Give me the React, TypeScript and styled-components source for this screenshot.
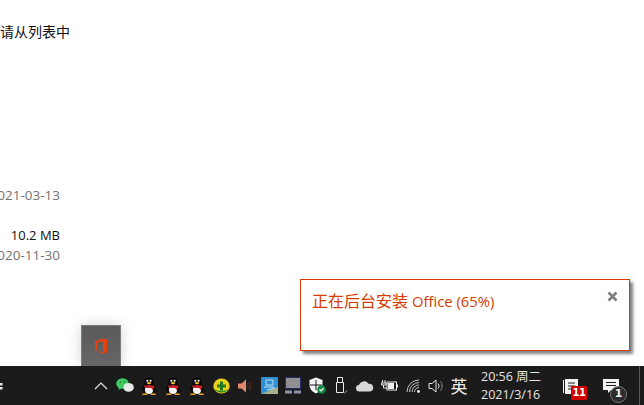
import React from 'react';
import styled, { createGlobalStyle } from 'styled-components';

const GlobalStyle = createGlobalStyle`
  html, body {
    margin: 0;
    padding: 0;
    width: 644px;
    height: 405px;
    overflow: hidden;
    background: #fff;
  }
  body {
    font-family: "Open Sans", "Noto Sans CJK SC", sans-serif;
  }
`;

const Screen = styled.div`
  position: relative;
  width: 644px;
  height: 405px;
  display: flex;
  flex-direction: column;
  overflow: hidden;
`;

const Content = styled.main`
  flex: 1;
  display: flex;
  flex-direction: column;
`;

const Hint = styled.div`
  margin-top: 22px;
  height: 18px;
  font: 14px/18px "Noto Sans CJK SC", sans-serif;
  color: #111;
  white-space: nowrap;
`;

const FileColumn = styled.div`
  width: 60px;
  display: flex;
  flex-direction: column;
  align-items: flex-end;
  margin-top: 146px;
`;

const DateText = styled.div<{ $gap?: number }>`
  height: 18px;
  margin-top: ${(p) => p.$gap ?? 0}px;
  font: 13.5px/18px "Open Sans", sans-serif;
  color: #737373;
  white-space: nowrap;
`;

const SizeText = styled.div`
  height: 18px;
  margin-top: 22px;
  font: 13px/18px "Open Sans", sans-serif;
  color: #111;
  white-space: nowrap;
`;

const Toast = styled.div`
  position: absolute;
  left: 300px;
  top: 279px;
  width: 306px;
  height: 70px;
  padding: 0 11px;
  border: 1px solid #d83b01;
  background: #fff;
  box-shadow: 3px 3px 3px #808080;
  display: flex;
  justify-content: space-between;
`;

const ToastText = styled.div`
  margin-top: 10px;
  font: 16px/20px "Noto Sans CJK SC", sans-serif;
  color: #d83b01;
  white-space: nowrap;
`;

const ToastLatin = styled.span`
  margin-left: 4px;
  font: 14.8px/20px "Open Sans", sans-serif;
`;

const CloseIcon = styled.svg`
  margin-top: 11px;
  width: 11px;
  height: 11px;
`;

const Thumb = styled.div`
  position: absolute;
  left: 81px;
  top: 325px;
  width: 40px;
  height: 41px;
  box-sizing: border-box;
  background: linear-gradient(#5a5a5a, #666);
  border: 1px solid #7c7c7c;
  border-bottom: none;
  box-shadow: 0 0 12px rgba(0, 0, 0, 0.18);
  display: flex;
  align-items: center;
  justify-content: center;
`;

const Taskbar = styled.footer`
  height: 39px;
  flex-shrink: 0;
  background: #1b1b1b;
  display: flex;
  align-items: center;
  color: #e8e8e8;
  position: relative;
`;

const StartStub = styled.svg`
  width: 4px;
  height: 12px;
  margin-right: 85px;
`;

const Tray = styled.div`
  display: flex;
  align-items: center;
`;

const Slot = styled.div<{ $w?: number }>`
  width: ${(p) => p.$w ?? 24}px;
  height: 39px;
  display: flex;
  align-items: center;
  justify-content: center;
  flex-shrink: 0;
`;

const Ime = styled.div`
  width: 24px;
  text-align: center;
  font: 17px/39px "Noto Sans CJK SC", sans-serif;
  color: #ededed;
`;

const Clock = styled.div`
  margin-left: 10px;
  width: 60px;
  display: flex;
  flex-direction: column;
  font: 12.5px/18px "Open Sans", "Noto Sans CJK SC", sans-serif;
  color: #e6e6e6;
  white-space: nowrap;
`;

const ActionWrap = styled.div<{ $left: number }>`
  position: relative;
  margin-left: ${(p) => p.$left}px;
  width: 24px;
  height: 24px;
`;

const ActionIcon = styled.svg`
  display: block;
  margin-top: 5px;
`;

const RedBadge = styled.div`
  position: absolute;
  left: 8px;
  top: 12px;
  width: 16px;
  height: 14px;
  background: #d00000;
  border-radius: 1px;
  color: #fff;
  font: bold 10px/14px "DejaVu Sans", sans-serif;
  text-align: center;
  letter-spacing: -0.5px;
`;

const RoundBadge = styled.div`
  position: absolute;
  left: 7px;
  top: 12px;
  width: 17px;
  height: 17px;
  box-sizing: border-box;
  border: 1.5px solid #7a7a7a;
  border-radius: 50%;
  background: #2b2b2b;
  color: #eee;
  font: bold 11px/14px "DejaVu Sans", sans-serif;
  text-align: center;
`;

const Divider = styled.div`
  position: absolute;
  right: 4px;
  top: 0;
  width: 1px;
  height: 100%;
  background: #5a5a5a;
`;

const Penguin = () => (
  <svg width="16" height="18" viewBox="0 0 15 17">
    <ellipse cx="7.500" cy="5.500" rx="4.600" ry="5.300" fill="#0a0a0a" />
    <ellipse cx="7.500" cy="11" rx="6.200" ry="5.600" fill="#0a0a0a" />
    <ellipse cx="7.500" cy="12.200" rx="3.800" ry="3.900" fill="#f4f4f4" />
    <ellipse cx="7.500" cy="5.800" rx="2" ry="1" fill="#f2b21c" />
    <circle cx="6" cy="3.600" r="1" fill="#fff" />
    <circle cx="9" cy="3.600" r="1" fill="#fff" />
    <path d="M2.500 8h10v1.800l-1 .6v2l-2-2H4z" fill="#d3202a" />
    <path d="M1.500 15.600h4.400v1.400H1zM9.100 15.600h4.400l.5 1.400H9.100z" fill="#f0a020" />
  </svg>
);

const App = () => (
  <>
    <GlobalStyle />
    <Screen>
      <Content>
        <Hint>请从列表中</Hint>
        <FileColumn>
          <DateText>2021-03-13</DateText>
          <SizeText>10.2 MB</SizeText>
          <DateText $gap={2}>2020-11-30</DateText>
        </FileColumn>
      </Content>

      <Toast>
        <ToastText>
          正在后台安装<ToastLatin>Office (65%)</ToastLatin>
        </ToastText>
        <CloseIcon viewBox="0 0 11 11">
          <path d="M1.500 1.500l8 8M9.500 1.500l-8 8" stroke="#7d7d7d" strokeWidth="2.600" />
        </CloseIcon>
      </Toast>

      <Thumb>
        <svg width="14" height="16" viewBox="0 0 14 16">
          <path d="M1 3.200 9 .6l4 1v12.800l-4 1.200-8-2.600 8 1V3.400L3.600 4.600v7L1 12.800z" fill="#e8400c" />
        </svg>
      </Thumb>

      <Taskbar>
        <StartStub viewBox="0 0 4 12">
          <path d="M0 3h2.500v2.500H0zM0 7h2.500v2.500H0z" fill="#e8e8e8" />
        </StartStub>
        <Tray>
          <Slot>
            <svg width="14" height="8" viewBox="0 0 14 8">
              <path d="M1 7l6-6 6 6" stroke="#e4e4e4" strokeWidth="1.200" fill="none" />
            </svg>
          </Slot>
          <Slot>
            <svg width="18" height="15" viewBox="0 0 18 15">
              <ellipse cx="6.500" cy="5.500" rx="6.300" ry="5.200" fill="#3fcb62" />
              <path d="M3 9l-.6 3 3-1.800z" fill="#3fcb62" />
              <ellipse cx="12.600" cy="9.400" rx="5.200" ry="4.400" fill="#e8e8e8" />
              <circle cx="4.400" cy="4" r=".8" fill="#1b6b32" />
              <circle cx="8.400" cy="4" r=".8" fill="#1b6b32" />
            </svg>
          </Slot>
          <Slot><Penguin /></Slot>
          <Slot><Penguin /></Slot>
          <Slot><Penguin /></Slot>
          <Slot>
            <svg width="17" height="16" viewBox="0 0 17 16">
              <ellipse cx="8.500" cy="8" rx="8.200" ry="7.600" fill="#e8d21a" />
              <path d="M1 11c2 4 12 5 15 0-3 2-10 3-15 0z" fill="#2f8a22" />
              <path d="M7 3.500h3V6.500h3v3h-3v3H7v-3H4v-3h3z" fill="#1f7a20" />
            </svg>
          </Slot>
          <Slot>
            <svg width="16" height="16" viewBox="0 0 16 16">
              <path d="M1 5.500h3.500L9 1.500v13L4.500 10.500H1z" fill="#e08a70" />
              <path d="M11 5v6M13.400 4v8" stroke="#4a2a20" strokeWidth="1.200" />
            </svg>
          </Slot>
          <Slot>
            <svg width="17" height="17" viewBox="0 0 17 17">
              <rect width="17" height="17" rx="1" fill="#2f8fd0" />
              <path d="M0 17 17 10v7z" fill="#a9b08c" />
              <path d="M5 3h7v5H5zM3 10h10M6 13l8-2" stroke="#bfe0f4" strokeWidth="1" fill="none" />
            </svg>
          </Slot>
          <Slot>
            <svg width="16" height="17" viewBox="0 0 16 17">
              <rect x=".5" y=".5" width="15" height="11" fill="#8f8f8f" stroke="#2a2a70" />
              <rect x="0" y="13.500" width="7" height="3" fill="#8d93a8" />
              <rect x="9" y="13.500" width="7" height="3" fill="#8d93a8" />
            </svg>
          </Slot>
          <Slot>
            <svg width="17" height="17" viewBox="0 0 17 17">
              <path d="M7 .5 13.500 3v5c0 4-3 7-6.500 8.500C3.500 15 .5 12 .5 8V3z" fill="#f2f2f2" />
              <path d="M7 3v10M1 8h12" stroke="#1b1b1b" strokeWidth="1" />
              <circle cx="12.500" cy="12.500" r="4.300" fill="#128a45" />
              <path d="M10.500 12.500l1.500 1.500 2.500-2.800" stroke="#fff" strokeWidth="1.200" fill="none" />
            </svg>
          </Slot>
          <Slot>
            <svg width="13" height="17" viewBox="0 0 13 17">
              <path d="M1.500 5.500h7v10h-7zM2.500 .5h5v5h-5z" fill="none" stroke="#eaeaea" strokeWidth="1" />
              <path d="M8 15l1.500 1 3-2.500" stroke="#9a9a9a" strokeWidth="1" fill="none" />
            </svg>
          </Slot>
          <Slot>
            <svg width="18" height="12" viewBox="0 0 18 12">
              <path d="M3.500 11.500A3.200 3.200 0 0 1 3 5.100 5.300 5.300 0 0 1 12.500 3.800a3.900 3.900 0 0 1 1.500 7.700z" fill="#d8d8d8" />
            </svg>
          </Slot>
          <Slot>
            <svg width="17" height="13" viewBox="0 0 17 13">
              <path d="M1.500 1v3M4 1v3M.5 4h4.500v2H.5zM2.500 6v3H6" stroke="#eee" strokeWidth="1" fill="none" />
              <rect x="6" y="3" width="9.500" height="8" fill="none" stroke="#eee" />
              <rect x="7" y="4" width="6" height="6" fill="#eee" />
              <rect x="16" y="5.500" width="1" height="3" fill="#eee" />
            </svg>
          </Slot>
          <Slot>
            <svg width="15" height="14" viewBox="0 0 15 14">
              <path d="M1 13A12 12 0 0 1 13 1M3.500 13A9.500 9.500 0 0 1 13 3.500M6 13A7 7 0 0 1 13 6M8.500 13A4.500 4.500 0 0 1 13 8.500" stroke="#c4c4c4" strokeWidth="1" fill="none" />
              <circle cx="12.500" cy="12.500" r="1.400" fill="#f0f0f0" />
            </svg>
          </Slot>
          <Slot $w={22}>
            <svg width="16" height="14" viewBox="0 0 16 14">
              <path d="M1 4.500h3L8 1v12L4 9.500H1z" fill="none" stroke="#e8e8e8" strokeWidth="1" />
              <path d="M10 4.500a3.500 3.500 0 0 1 0 5" stroke="#e8e8e8" strokeWidth="1" fill="none" />
              <path d="M12.500 2.500a7 7 0 0 1 0 9" stroke="#8a8a8a" strokeWidth="1" fill="none" />
            </svg>
          </Slot>
          <Ime>英</Ime>
        </Tray>
        <Clock>
          <span>20:56 周二</span>
          <span>2021/3/16</span>
        </Clock>
        <ActionWrap $left={22}>
          <ActionIcon width="16" height="16" viewBox="0 0 16 16">
            <path d="M2 0h13v15H2z" fill="#f2f2f2" />
            <path d="M0 1h1v13H0z" fill="#f2f2f2" />
            <path d="M5 4h7M5 7h7M5 10h4" stroke="#1b1b1b" strokeWidth="1.200" />
          </ActionIcon>
          <RedBadge>11</RedBadge>
        </ActionWrap>
        <ActionWrap $left={16}>
          <ActionIcon width="16" height="14" viewBox="0 0 16 14">
            <path d="M0 0h16v11H8l-3 3v-3H0z" fill="#f2f2f2" />
            <path d="M3 3.500h10M3 6.500h10" stroke="#1b1b1b" strokeWidth="1.200" />
          </ActionIcon>
          <RoundBadge>1</RoundBadge>
        </ActionWrap>
        <Divider />
      </Taskbar>
    </Screen>
  </>
);

export default App;
